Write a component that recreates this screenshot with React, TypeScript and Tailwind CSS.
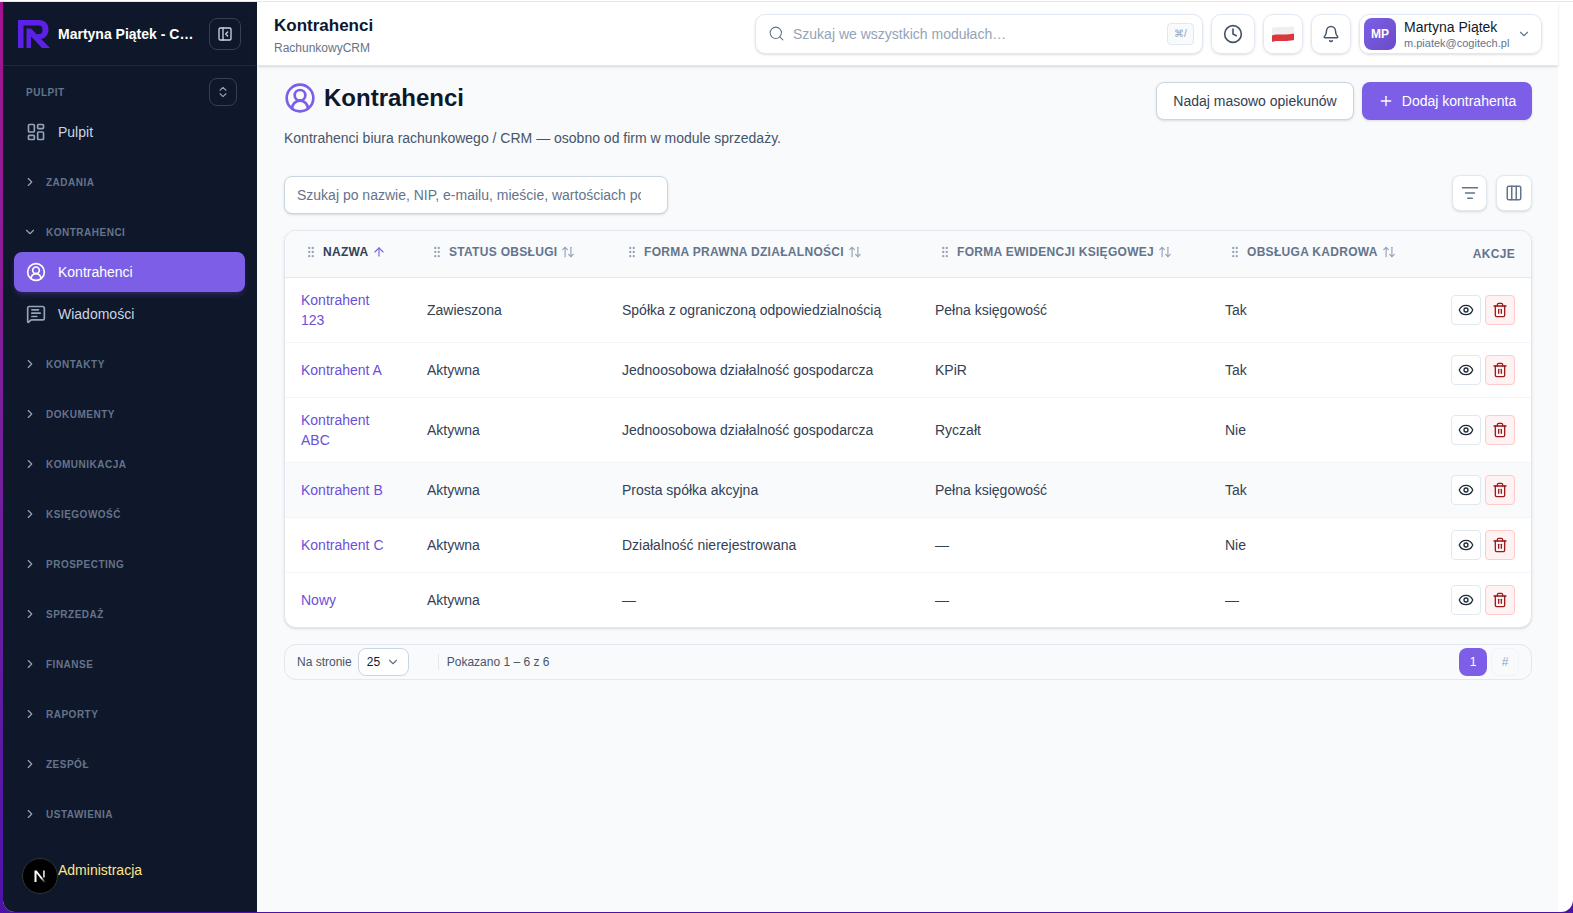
import React from "react";
import {
  ArrowUp, ArrowUpDown, Bell, ChevronDown, ChevronRight, ChevronsUpDown, CircleUserRound, Clock, Columns3, Eye,
  GripVertical, LayoutDashboard, ListFilter, MessageSquareText, PanelLeftClose, Plus, Search, Trash2,
} from "lucide-react";

const font = { fontFamily: "'Liberation Sans', Arial, sans-serif" };

function Logo() {
  return (
    <svg width="32" height="28" viewBox="0 0 32 28" className="shrink-0">
      <path d="M0 0H21C27 0 30.500 4 30.500 9.500C30.500 15 27 19 22 19H19V14H21.500C23.500 14 24.500 12 24.500 9.500C24.500 7 23 5.500 21 5.500H5.500V28H0Z" fill="#5b21e6" />
      <path d="M8.500 8.500H13L32 28H24L13 16.500V28H8.500Z" fill="#5b21e6" />
    </svg>
  );
}

function NextMark() {
  return (
    <svg width="14" height="14" viewBox="0 0 14 14">
      <defs>
        <linearGradient id="nx" x1="0.2" y1="0.2" x2="0.8" y2="1">
          <stop offset="0.55" stopColor="#ffffff" />
          <stop offset="1" stopColor="#ffffff" stopOpacity="0.15" />
        </linearGradient>
      </defs>
      <path d="M1.500 13V1.500H3.700L13 13.500H10.800L3.500 4.300V13Z" fill="url(#nx)" />
      <rect x="10" y="1.500" width="1.800" height="7" fill="#ffffff" opacity="0.8" />
    </svg>
  );
}

function Flag() {
  return (
    <svg width="24" height="18" viewBox="0 0 24 18">
      <path d="M1 3C6 0.500 12 3.500 23 1V9C12 11.500 6 8.500 1 11Z" fill="#f1eeee" />
      <path d="M1 10.500C6 8 12 11 23 8.500V15C12 17.500 6 14.500 1 17Z" fill="#d9363e" />
    </svg>
  );
}

function SectionHead({ label, open }: { label: string; open?: boolean }) {
  return (
    <div className="flex h-[20px] items-center gap-[9px] pl-[20px]">
      {open ? <ChevronDown size={14} className="text-[#94a3b8]" /> : <ChevronRight size={14} className="text-[#94a3b8]" />}
      <span className="text-[10px] font-bold tracking-[0.05em] text-[#64748b]">{label}</span>
    </div>
  );
}

function Th({ label, w, active }: { label: string; w: string; active?: boolean }) {
  return (
    <th className={`${w} h-[46px] pl-[19px] text-left align-middle`}>
      <div className="flex -translate-y-[2px] items-center">
        <GripVertical size={14} className="shrink-0 text-[#94a3b8]" />
        <span className={`ml-[5px] whitespace-nowrap text-[12px] font-bold tracking-[0.025em] ${active ? "text-[#334155]" : "text-[#64748b]"}`}>{label}</span>
        {active ? <ArrowUp size={14} className="ml-[3px] shrink-0 text-[#7c5fe6]" /> : <ArrowUpDown size={14} className="ml-[4px] shrink-0 text-[#94a3b8]" />}
      </div>
    </th>
  );
}

const rows = [
  ["Kontrahent 123", "Zawieszona", "Spółka z ograniczoną odpowiedzialnością", "Pełna księgowość", "Tak", "h-[65px]"],
  ["Kontrahent A", "Aktywna", "Jednoosobowa działalność gospodarcza", "KPiR", "Tak", "h-[55px]"],
  ["Kontrahent ABC", "Aktywna", "Jednoosobowa działalność gospodarcza", "Ryczałt", "Nie", "h-[65px]"],
  ["Kontrahent B", "Aktywna", "Prosta spółka akcyjna", "Pełna księgowość", "Tak", "h-[55px]"],
  ["Kontrahent C", "Aktywna", "Działalność nierejestrowana", "—", "Nie", "h-[55px]"],
  ["Nowy", "Aktywna", "—", "—", "—", "h-[55px]"],
];

const groups = ["KONTAKTY", "DOKUMENTY", "KOMUNIKACJA", "KSIĘGOWOŚĆ", "PROSPECTING", "SPRZEDAŻ", "FINANSE", "RAPORTY", "ZESPÓŁ", "USTAWIENIA"];

export default function App() {
  return (
    <div style={font} className="flex h-[913px] flex-col overflow-hidden bg-gradient-to-b from-[#a3128f] to-[#4c12a8]">
      <div className="h-[2px] shrink-0 border-b border-[#e5e7eb] bg-white" />
      <div className="flex min-h-0 flex-1 pb-[1px] pl-[3px]">
        <div className="flex min-w-0 flex-1 overflow-hidden rounded-b-[12px] bg-white">
          <aside className="flex w-[254px] shrink-0 flex-col bg-[#0f172a]">
            <div className="flex h-[64px] shrink-0 items-center border-b border-[#1e293b] pl-[15px] pr-[16px]">
              <Logo />
              <span className="ml-[8px] w-[136px] translate-y-[1px] truncate text-[14px] font-bold text-white">Martyna Piątek - Cogitech</span>
              <button className="ml-auto flex h-[32px] w-[32px] items-center justify-center rounded-[8px] border border-[#334155]">
                <PanelLeftClose size={16} className="text-[#cbd5e1]" />
              </button>
            </div>
            <div className="mt-[13px] flex h-[26px] shrink-0 items-center justify-between pl-[23px] pr-[20px]">
              <span className="text-[10px] font-bold tracking-[0.05em] text-[#64748b]">PULPIT</span>
              <button className="flex h-[28px] w-[28px] items-center justify-center rounded-[8px] border border-[#334155]">
                <ChevronsUpDown size={14} className="text-[#94a3b8]" />
              </button>
            </div>
            <div className="mt-[7px] flex h-[40px] items-center gap-[12px] pl-[23px] text-[14px] text-[#cbd5e1]">
              <LayoutDashboard size={20} className="text-[#94a3b8]" />
              <span>Pulpit</span>
            </div>
            <div className="mt-[20px]"><SectionHead label="ZADANIA" /></div>
            <div className="mt-[30px]"><SectionHead label="KONTRAHENCI" open /></div>
            <div className="ml-[11px] mr-[12px] mt-[10px] flex h-[40px] items-center gap-[12px] rounded-[8px] bg-[#7c5fe6] pl-[12px] text-[14px] text-white shadow-md shadow-[#7c5fe6]/20">
              <CircleUserRound size={20} />
              <span>Kontrahenci</span>
            </div>
            <div className="mt-[2px] flex h-[40px] items-center gap-[12px] pl-[23px] text-[14px] text-[#cbd5e1]">
              <MessageSquareText size={20} className="text-[#94a3b8]" />
              <span>Wiadomości</span>
            </div>
            <div className="mt-[20px] flex flex-col gap-[30px]">
              {groups.map((g) => <SectionHead key={g} label={g} />)}
            </div>
            <div className="relative mt-[34px] h-[40px] pl-[55px] text-[14px] leading-[24px] text-[#fde68a]">
              <span>Administracja</span>
              <div className="absolute left-[19px] top-0 flex h-[36px] w-[36px] items-center justify-center rounded-full border border-[#333] bg-black">
                <NextMark />
              </div>
            </div>
          </aside>

          <main className="flex w-[1301px] shrink-0 flex-col bg-[#f8fafc]">
            <header className="flex h-[64px] shrink-0 items-center border-b border-[#e2e8f0] bg-white pl-[17px] pr-[16px] shadow-sm">
              <div className="w-[481px] shrink-0 translate-y-[2px]">
                <div className="text-[17px] font-bold leading-[22px] text-[#0f172a]">Kontrahenci</div>
                <div className="mt-[3px] text-[12px] leading-[16px] text-[#64748b]">RachunkowyCRM</div>
              </div>
              <div className="flex h-[40px] w-[448px] items-center rounded-[10px] border border-[#e2e8f0] bg-white pl-[12px] pr-[8px] shadow-sm">
                <Search size={17} strokeWidth={1.5} className="text-[#64748b]" />
                <span className="ml-[8px] translate-y-[1px] text-[14px] text-[#94a3b8]">Szukaj we wszystkich modułach…</span>
                <span className="ml-auto flex h-[22px] w-[27px] items-center justify-center rounded-[4px] border border-[#e2e8f0] bg-[#f8fafc] text-[10px] text-[#94a3b8]">⌘/</span>
              </div>
              <button className="ml-[8px] flex h-[40px] w-[44px] items-center justify-center rounded-[10px] border border-[#e2e8f0] shadow-sm">
                <Clock size={20} className="text-[#475569]" />
              </button>
              <button className="ml-[8px] flex h-[40px] w-[40px] items-center justify-center rounded-[10px] border border-[#e2e8f0] shadow-sm">
                <Flag />
              </button>
              <button className="ml-[8px] flex h-[40px] w-[40px] items-center justify-center rounded-[10px] border border-[#e2e8f0] shadow-sm">
                <Bell size={18} className="text-[#475569]" />
              </button>
              <button className="ml-[8px] flex h-[40px] w-[183px] items-center rounded-[10px] border border-[#e2e8f0] pl-[4px] pr-[10px] shadow-sm">
                <span className="flex h-[32px] w-[32px] items-center justify-center rounded-[8px] bg-gradient-to-br from-[#7c5fe6] to-[#6a4bc9] text-[12px] font-bold text-white">MP</span>
                <span className="ml-[8px] flex flex-col text-left">
                  <span className="text-[14px] leading-[18px] text-[#0f172a]">Martyna Piątek</span>
                  <span className="text-[11px] leading-[14px] text-[#64748b]">m.piatek@cogitech.pl</span>
                </span>
                <ChevronDown size={14} className="ml-auto text-[#64748b]" />
              </button>
            </header>

            <div className="pl-[27px] pr-[26px] pt-[16px]">
              <div className="flex items-start justify-between">
                <div className="flex items-center gap-[8px]">
                  <CircleUserRound size={32} className="text-[#7c5fe6]" strokeWidth={2} />
                  <h1 className="text-[24px] font-bold leading-[32px] text-[#0f172a]">Kontrahenci</h1>
                </div>
                <div className="flex gap-[8px]">
                  <button className="h-[38px] w-[198px] rounded-[8px] border border-[#cbd5e1] bg-white text-[14px] text-[#334155] shadow-sm">Nadaj masowo opiekunów</button>
                  <button className="flex h-[38px] w-[170px] items-center justify-center gap-[8px] rounded-[8px] bg-[#7c5fe6] text-[14px] text-white shadow-sm">
                    <Plus size={16} /><span>Dodaj kontrahenta</span>
                  </button>
                </div>
              </div>
              <p className="mt-[8px] text-[14px] leading-[20px] text-[#475569]">Kontrahenci biura rachunkowego / CRM — osobno od firm w module sprzedaży.</p>

              <div className="mt-[28px] flex items-center justify-between">
                <input
                  readOnly
                  placeholder="Szukaj po nazwie, NIP, e-mailu, mieście, wartościach pola"
                  className="h-[38px] w-[384px] rounded-[8px] border border-[#cbd5e1] bg-white pl-[12px] pr-[26px] text-[14px] shadow-sm outline-none placeholder:text-[#64748b]"
                />
                <div className="flex -translate-y-[2px] gap-[9px]">
                  <button className="flex h-[36px] w-[35px] items-center justify-center rounded-[8px] border border-[#e2e8f0] bg-white shadow-sm">
                    <ListFilter size={18} className="text-[#64748b]" />
                  </button>
                  <button className="flex h-[36px] w-[36px] items-center justify-center rounded-[8px] border border-[#e2e8f0] bg-white shadow-sm">
                    <Columns3 size={18} className="text-[#64748b]" />
                  </button>
                </div>
              </div>

              <div className="mt-[16px] overflow-hidden rounded-[12px] border border-[#e2e8f0] bg-white shadow-sm">
                <table className="w-full table-fixed border-collapse">
                  <thead>
                    <tr className="border-b border-[#e2e8f0] bg-[#f8fafc]">
                      <Th label="NAZWA" w="w-[126px]" active />
                      <Th label="STATUS OBSŁUGI" w="w-[195px]" />
                      <Th label="FORMA PRAWNA DZIAŁALNOŚCI" w="w-[313px]" />
                      <Th label="FORMA EWIDENCJI KSIĘGOWEJ" w="w-[290px]" />
                      <Th label="OBSŁUGA KADROWA" w="w-[210px]" />
                      <th className="pr-4 text-right text-[12px] font-bold tracking-[0.025em] text-[#64748b]">AKCJE</th>
                    </tr>
                  </thead>
                  <tbody>
                    {rows.map((r, i) => (
                      <tr key={r[0]} className={`${r[5]} border-b border-[#f1f5f9] text-[14px] leading-[20px] last:border-b-0 ${i === 3 ? "bg-[#f8fafc]" : ""}`}>
                        <td className="px-4 text-[#6d4fd8]">{r[0]}</td>
                        <td className="px-4 text-[#334155]">{r[1]}</td>
                        <td className="px-4 text-[#334155]">{r[2]}</td>
                        <td className="px-4 text-[#334155]">{r[3]}</td>
                        <td className="px-4 text-[#334155]">{r[4]}</td>
                        <td className="pr-4">
                          <div className="flex justify-end gap-[4px]">
                            <button className="flex h-[30px] w-[30px] items-center justify-center rounded-[4px] border border-[#e2e8f0] bg-white">
                              <Eye size={16} className="text-[#1e293b]" />
                            </button>
                            <button className="flex h-[30px] w-[30px] items-center justify-center rounded-[4px] border border-[#fecaca] bg-[#fef2f2]">
                              <Trash2 size={16} className="text-[#991b1b]" />
                            </button>
                          </div>
                        </td>
                      </tr>
                    ))}
                  </tbody>
                </table>
              </div>

              <div className="mt-[16px] flex h-[36px] items-center rounded-[12px] border border-[#e2e8f0] bg-[#f8fafc] pl-[12px] pr-[12px] text-[12px] text-[#475569]">
                <span>Na stronie</span>
                <span className="ml-[6px] flex h-[28px] w-[51px] items-center justify-between rounded-[8px] border border-[#cbd5e1] bg-white pl-[8px] pr-[8px] text-[12px] text-[#0f172a]">
                  25 <ChevronDown size={14} className="text-[#64748b]" />
                </span>
                <span className="ml-[29px] h-[16px] w-px bg-[#e2e8f0]" />
                <span className="ml-[8px]">Pokazano 1 – 6 z 6</span>
                <span className="ml-auto flex h-[28px] w-[28px] items-center justify-center rounded-[8px] bg-[#7c5fe6] text-white">1</span>
                <span className="ml-[4px] flex h-[28px] w-[28px] items-center justify-center rounded-[8px] border border-[#f1f5f9] text-[#94a3b8]">#</span>
              </div>
            </div>
          </main>
        </div>
      </div>
    </div>
  );
}
